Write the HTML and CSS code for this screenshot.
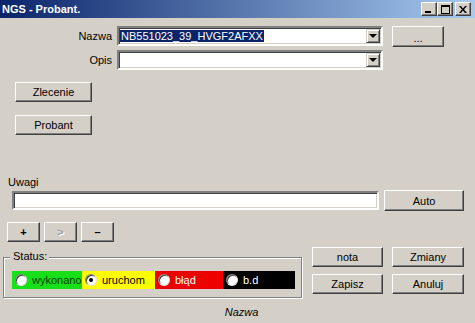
FILE: index.html
```html
<!DOCTYPE html>
<html lang="pl">
<head>
    <meta charset="UTF-8">
    <title>NGS - Probant.</title>
    <link rel="stylesheet" href="styles.css">
</head>
<body>
    <div class="window">
        <div class="titlebar">
            <span class="title">NGS - Probant.</span>
            <div class="caption-btns">
                <span class="cap-btn"><span class="ico-min"></span></span>
                <span class="cap-btn"><span class="ico-max"></span></span>
                <span class="cap-btn cap-close">
                    <svg width="8" height="7" viewBox="0 0 8 7"><path d="M0 0h2l2 2.5L6 0h2L5 3.5 8 7H6L4 4.5 2 7H0l3-3.5z" fill="#000"/></svg>
                </span>
            </div>
        </div>

        <div class="row row-nazwa">
            <label class="field-label">Nazwa</label>
            <div class="combo">
                <span class="combo-text"><span class="selected">NB551023_39_HVGF2AFXX</span></span>
                <span class="combo-btn"><span class="arrow"></span></span>
            </div>
            <button class="btn btn-dots">...</button>
        </div>

        <div class="row row-opis">
            <label class="field-label">Opis</label>
            <div class="combo">
                <span class="combo-text"></span>
                <span class="combo-btn"><span class="arrow"></span></span>
            </div>
        </div>

        <button class="btn btn-side btn-zlecenie">Zlecenie</button>
        <button class="btn btn-side btn-probant">Probant</button>

        <div class="uwagi-label">Uwagi</div>
        <div class="row row-uwagi">
            <div class="textbox"></div>
            <button class="btn btn-auto">Auto</button>
        </div>

        <div class="row row-nav">
            <button class="btn btn-nav">+</button>
            <button class="btn btn-nav btn-disabled">&gt;</button>
            <button class="btn btn-nav">&ndash;</button>
        </div>

        <div class="row row-bottom">
            <div class="groupbox">
                <span class="legend">Status:</span>
                <div class="status-strips">
                    <div class="strip strip-green"><span class="radio"></span>wykonano</div>
                    <div class="strip strip-yellow"><span class="radio checked"></span>uruchom</div>
                    <div class="strip strip-red"><span class="radio"></span>błąd</div>
                    <div class="strip strip-black"><span class="radio"></span>b.d</div>
                </div>
            </div>
            <div class="action-grid">
                <button class="btn">nota</button>
                <button class="btn">Zmiany</button>
                <button class="btn">Zapisz</button>
                <button class="btn">Anuluj</button>
            </div>
        </div>

        <div class="status-caption">Nazwa</div>
    </div>
</body>
</html>
```

FILE: styles.css
```css
body {
    margin: 0;
    background: #d4d0c8;
    font-family: 'Liberation Sans', Arial, sans-serif;
    font-size: 11px;
    color: #000;
}
.window {
    width: 475px;
    height: 323px;
    overflow: hidden;
    background: #d4d0c8;
}
.titlebar {
    height: 18px;
    display: flex;
    align-items: center;
    justify-content: space-between;
    background: linear-gradient(to right, #0a246a, #a6caf0);
}
.title {
    color: #fff;
    font-weight: bold;
    margin-left: 2px;
    font-size: 11px;
}
.caption-btns {
    display: flex;
    align-items: center;
    margin-right: 4px;
}
.cap-btn {
    width: 14px;
    height: 12px;
    background: #d4d0c8;
    border: 1px solid;
    border-color: #fff #404040 #404040 #fff;
    box-shadow: inset -1px -1px #808080;
    display: flex;
    align-items: center;
    justify-content: center;
}
.cap-close {
    margin-left: 2px;
}
.ico-min {
    width: 6px;
    height: 2px;
    background: #000;
    margin-top: 6px;
    margin-right: 2px;
}
.ico-max {
    width: 7px;
    height: 6px;
    border: 1px solid #000;
    border-top-width: 2px;
}
.row {
    display: flex;
}
.field-label {
    width: 112px;
    text-align: right;
    line-height: 20px;
}
.row-nazwa {
    margin-top: 8px;
    height: 21px;
}
.row-opis {
    margin-top: 3px;
}
.combo {
    width: 262px;
    height: 16px;
    margin-left: 5px;
    background: #fff;
    border: 2px solid;
    border-color: #808080 #fff #fff #808080;
    box-shadow: inset 1px 1px #404040, inset -1px -1px #d4d0c8;
    display: flex;
    align-items: center;
}
.combo-text {
    flex: 1;
    padding-left: 1px;
    line-height: 14px;
}
.selected {
    background: #0a246a;
    color: #fff;
    padding: 0 1px;
}
.combo-btn {
    width: 12px;
    height: 12px;
    margin-right: 1px;
    background: #d4d0c8;
    border: 1px solid;
    border-color: #d4d0c8 #404040 #404040 #d4d0c8;
    box-shadow: inset 1px 1px #fff, inset -1px -1px #808080;
    display: flex;
    align-items: center;
    justify-content: center;
}
.arrow {
    width: 0;
    height: 0;
    border-left: 4px solid transparent;
    border-right: 4px solid transparent;
    border-top: 4px solid #000;
}
.btn {
    font-family: 'Liberation Sans', Arial, sans-serif;
    font-size: 11px;
    color: #000;
    background: #d4d0c8;
    border: 1px solid;
    border-color: #fff #404040 #404040 #fff;
    box-shadow: inset -1px -1px #808080;
    padding: 0;
    margin: 0;
    display: block;
}
.btn-dots {
    width: 52px;
    height: 21px;
    margin-left: 9px;
    padding-top: 3px;
}
.btn-side {
    width: 77px;
    height: 20px;
    margin-left: 15px;
}
.btn-zlecenie {
    margin-top: 12px;
}
.btn-probant {
    margin-top: 13px;
}
.uwagi-label {
    margin-top: 41px;
    margin-left: 8px;
    height: 13px;
    line-height: 13px;
}
.row-uwagi {
    margin-top: 1px;
    align-items: flex-start;
}
.textbox {
    width: 363px;
    height: 15px;
    margin-left: 12px;
    margin-top: 1px;
    background: #fff;
    border: 2px solid;
    border-color: #808080 #fff #fff #808080;
    box-shadow: inset 1px 1px #404040, inset -1px -1px #d4d0c8;
}
.btn-auto {
    width: 80px;
    height: 21px;
    margin-left: 5px;
}
.row-nav {
    margin-top: 11px;
    margin-left: 7px;
    gap: 4px;
}
.btn-nav {
    width: 33px;
    height: 20px;
    font-weight: bold;
}
.btn-disabled {
    color: #a0a0a0;
    text-shadow: 1px 1px #fff;
}
.row-bottom {
    margin-top: 5px;
    align-items: flex-start;
}
/* etched frame: grey line with a white line just inside/outside */
.groupbox {
    position: relative;
    width: 297px;
    height: 39px;
    margin-top: 10px;
    margin-left: 3px;
    border: 1px solid #808080;
    box-shadow: inset 1px 1px #fff, 1px 1px #fff;
}
.legend {
    position: absolute;
    left: 6px;
    top: -8px;
    padding: 0 2px 0 3px;
    background: #d4d0c8;
    line-height: 13px;
}
.status-strips {
    display: flex;
    margin-top: 13px;
    margin-left: 8px;
}
.strip {
    height: 18px;
    display: flex;
    align-items: center;
    padding-left: 3px;
    box-sizing: border-box;
}
.strip-green {
    width: 70px;
    background: #18e018;
    color: #004000;
}
.strip-yellow {
    width: 73px;
    background: #ffff00;
}
.strip-red {
    width: 68px;
    background: #ee0000;
    color: #fff;
}
.strip-black {
    width: 72px;
    background: #000;
    color: #fff;
}
.radio {
    width: 10px;
    height: 10px;
    border-radius: 50%;
    background: #fff;
    border: 1px solid;
    border-color: #808080 #e0e0e0 #e0e0e0 #808080;
    box-shadow: inset 1px 1px #404040;
    margin-right: 5px;
    position: relative;
    flex: none;
}
.radio.checked::after {
    content: "";
    position: absolute;
    left: 3px;
    top: 3px;
    width: 4px;
    height: 4px;
    border-radius: 50%;
    background: #000;
}
.action-grid {
    display: grid;
    grid-template-columns: 71px 72px;
    grid-auto-rows: 20px;
    column-gap: 9px;
    row-gap: 7px;
    margin-left: 10px;
}
.action-grid .btn {
    width: 100%;
    height: 20px;
}
.status-caption {
    margin-top: 8px;
    text-align: center;
    width: 483px;
    font-style: italic;
    line-height: 13px;
}
```
